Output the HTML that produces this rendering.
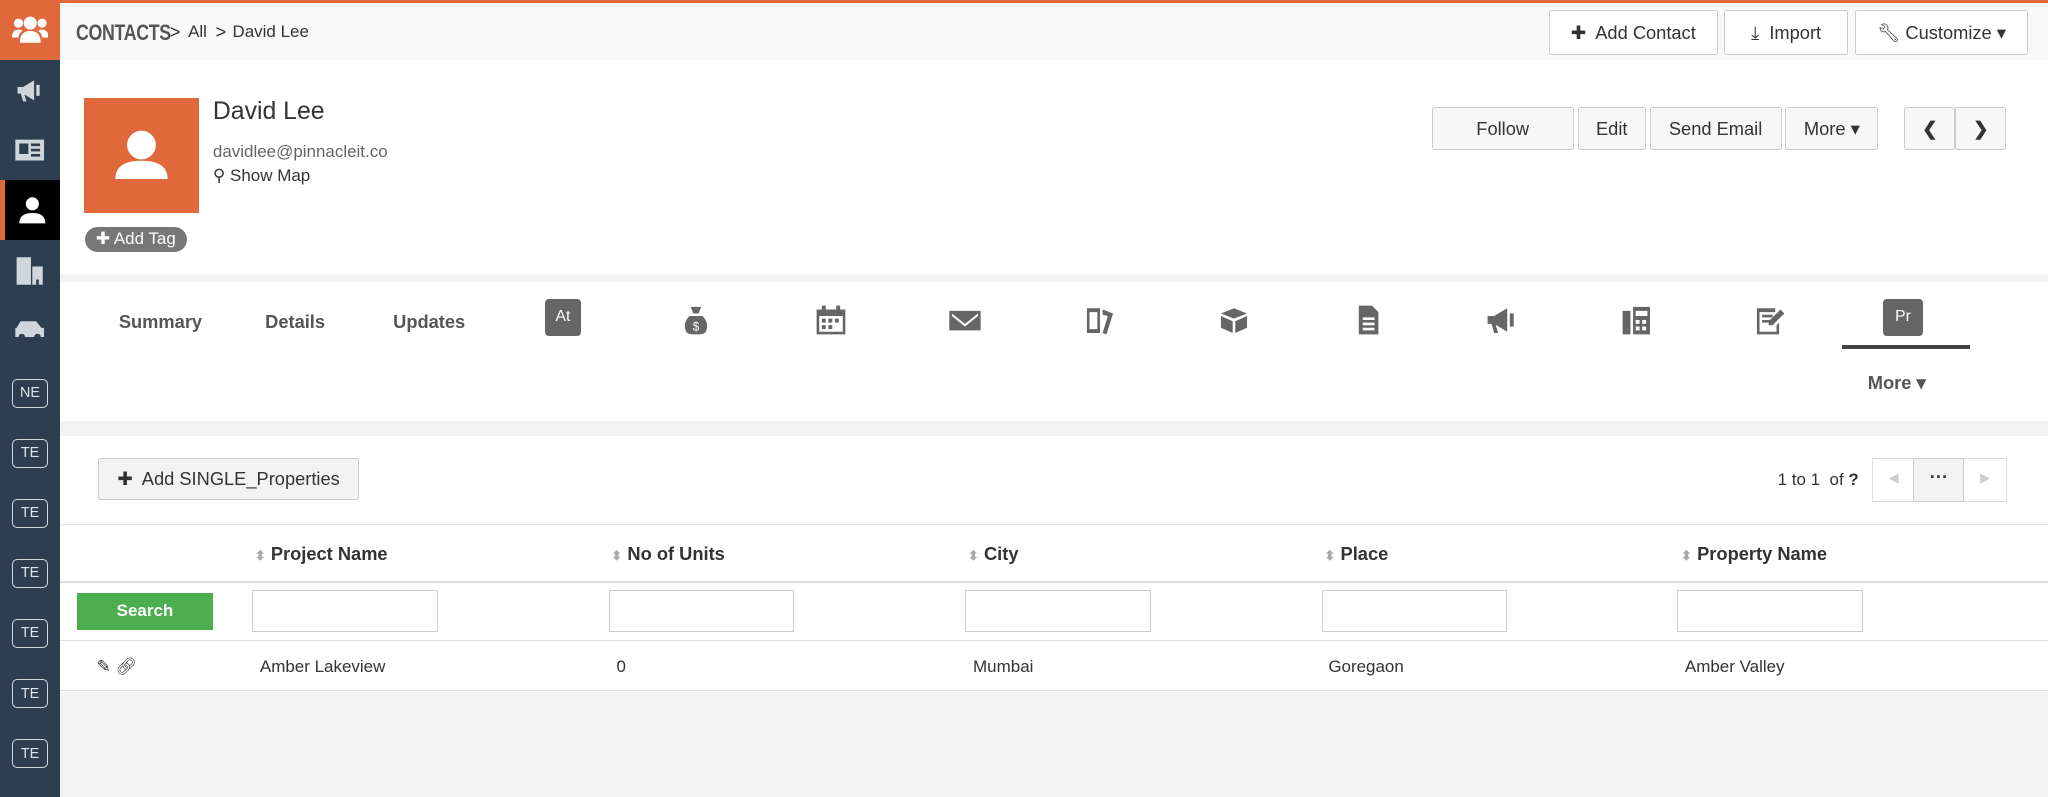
<!DOCTYPE html>
<html><head><meta charset="utf-8"><style>
*{box-sizing:border-box;margin:0;padding:0}
html,body{width:2048px;height:797px;overflow:hidden;background:#f3f3f3}
#w{zoom:1.30612;width:1568px;height:610px;position:relative;font-family:"Liberation Sans",Arial,sans-serif;color:#333;font-size:14px;background:#f3f3f3}
.a{position:absolute}
.sb{left:0;top:0;width:46px;height:610px;background:#2d3e50}
.si{position:absolute;left:0;width:46px;height:46px;display:flex;align-items:center;justify-content:center}
.bx{width:28px;height:22px;border:1.5px solid #cfd6dc;border-radius:4px;color:#dfe4e8;font-size:11px;display:flex;align-items:center;justify-content:center}
.btn{position:absolute;background:#f7f7f7;border:1px solid #ccc;border-radius:2px;display:flex;align-items:center;justify-content:center;font-size:14px;color:#333}
.tab{position:absolute;top:238px;font-size:14px;color:#555;font-weight:bold}
.ic{position:absolute;top:232px;width:26px;height:26px;fill:#666}
.th{position:absolute;top:416px;font-weight:bold;font-size:14px}
.th:before{content:"⬍";color:#aaa;font-size:10px;margin-right:4px}
.in{position:absolute;top:452px;width:142px;height:32px;border:1px solid #ccc;background:#fff}
.td{position:absolute;top:503px;font-size:13px}
</style></head><body><div id="w">
<div class="a" style="left:46px;top:0;width:1522px;height:2px;background:#e0693b"></div>
<div class="a" style="left:46px;top:2px;width:1522px;height:44px;background:#f9f9f9"></div>
<div class="a" style="left:58px;top:15px;font-weight:bold;font-size:17px;color:#555;letter-spacing:-0.3px;transform:scaleX(.8);transform-origin:left">CONTACTS</div>
<div class="a" style="left:130px;top:16px;font-size:14px;color:#333">&gt;</div>
<div class="a" style="left:144px;top:17px;font-size:13px;color:#333">All</div>
<div class="a" style="left:165px;top:16px;font-size:14px;color:#333">&gt;</div>
<div class="a" style="left:178px;top:17px;font-size:13px;color:#333">David Lee</div>
<div class="btn" style="left:1186px;top:8px;width:129px;height:34px;background:#fff">✚&nbsp; Add Contact</div>
<div class="btn" style="left:1320px;top:8px;width:95px;height:34px;background:#fff">⤓&nbsp; Import</div>
<div class="btn" style="left:1420px;top:8px;width:133px;height:34px;background:#fff">🔧︎ Customize ▾</div>
<div class="a" style="left:46px;top:46px;width:1522px;height:164px;background:#fff"></div>
<div class="a" style="left:64px;top:75px;width:88px;height:88px;background:#e0693b"><svg width="88" height="88"><circle cx="44" cy="36" r="11" fill="#fff"/><path d="M24 62 Q24 48 44 48 Q64 48 64 62 Z" fill="#fff"/></svg></div>
<div class="a" style="left:65px;top:174px;width:78px;height:19px;border-radius:10px;background:#777;color:#fff;font-size:13px;text-align:center;line-height:19px">✚ Add Tag</div>
<div class="a" style="left:163px;top:75px;font-size:19px;color:#333">David Lee</div>
<div class="a" style="left:163px;top:109px;font-size:13px;color:#666">davidlee@pinnacleit.co</div>
<div class="a" style="left:163px;top:127px;font-size:13px;color:#333">⚲ Show Map</div>
<div class="btn" style="left:1096px;top:82px;width:109px;height:33px">Follow</div>
<div class="btn" style="left:1208px;top:82px;width:52px;height:33px">Edit</div>
<div class="btn" style="left:1263px;top:82px;width:101px;height:33px">Send Email</div>
<div class="btn" style="left:1367px;top:82px;width:71px;height:33px">More ▾</div>
<div class="btn" style="left:1458px;top:82px;width:39px;height:33px;font-weight:bold">❮</div>
<div class="btn" style="left:1497px;top:82px;width:39px;height:33px;font-weight:bold">❯</div>
<div class="a" style="left:46px;top:216px;width:1522px;height:106px;background:#fff"></div>
<div class="tab" style="left:91px">Summary</div>
<div class="tab" style="left:203px">Details</div>
<div class="tab" style="left:301px">Updates</div>
<div class="a" style="left:417px;top:229px;width:28px;height:28px;border-radius:3px;background:#666;color:#fff;font-size:12px;text-align:center;line-height:28px">At</div>
<svg class="ic" style="left:520px" viewBox="0 0 26 26"><path d="M9 3h8l-2 5h-4zM8 10h10q5 5 3 11-1 3-5 3h-6q-4 0-5-3-2-6 3-11z"/><text x="13" y="21" font-size="9" fill="#fff" text-anchor="middle" font-family="Liberation Sans">$</text></svg>
<svg class="ic" style="left:623px" viewBox="0 0 26 26"><path d="M2 5h22v19H2zM4 10v12h18V10z"/><rect x="6" y="2" width="3" height="6"/><rect x="17" y="2" width="3" height="6"/><rect x="6" y="12" width="3" height="3"/><rect x="11" y="12" width="3" height="3"/><rect x="16" y="12" width="3" height="3"/><rect x="6" y="17" width="3" height="3"/><rect x="11" y="17" width="3" height="3"/></svg>
<svg class="ic" style="left:726px" viewBox="0 0 26 26"><path d="M1 6h24v15H1zM3 8l10 8 10-8v2l-10 8-10-8z" fill-rule="evenodd"/></svg>
<svg class="ic" style="left:829px" viewBox="0 0 26 26"><path d="M3 4h10v19H3zM5 7v13h6V7zM15 5l8 3-5 16-3-1 4-13-4-1z"/></svg>
<svg class="ic" style="left:932px" viewBox="0 0 26 26"><path d="M13 4l10 4-10 4-10-4zM3 10l9 4v9l-9-4zM23 10l-9 4v9l9-4z"/></svg>
<svg class="ic" style="left:1034px" viewBox="0 0 26 26"><path d="M6 2h10l5 5v17H6zM9 11h9v2H9zM9 15h9v2H9zM9 19h9v2H9z" fill-rule="evenodd"/></svg>
<svg class="ic" style="left:1137px" viewBox="0 0 26 26"><path d="M2 10h5l10-6v18l-10-6H2zM19 8h3v10h-3zM8 16l2 7h-3l-2-7z"/></svg>
<svg class="ic" style="left:1240px" viewBox="0 0 26 26"><path d="M2 6h6v18H2zM10 3h13v21H10zM12 6v4h9V6zM12 13h3v3h-3zM17 13h3v3h-3zM12 18h3v3h-3zM17 18h3v3h-3z" fill-rule="evenodd"/></svg>
<svg class="ic" style="left:1342px" viewBox="0 0 26 26"><path d="M3 4h14v3H5v15h13v-5l2-2v9H3zM7 9h8v2H7zM7 13h6v2H7zM21 5l3 3-9 9h-3v-3z"/></svg>
<div class="a" style="left:1442px;top:229px;width:30px;height:28px;border-radius:3px;background:#666;color:#fff;font-size:12px;text-align:center;line-height:28px">Pr</div>
<div class="a" style="left:1410px;top:264px;width:98px;height:3px;background:#444"></div>
<div class="a" style="left:1430px;top:285px;font-size:14px;color:#555;font-weight:bold">More ▾</div>
<div class="a" style="left:46px;top:334px;width:1522px;height:196px;background:#fff"></div>
<div class="btn" style="left:75px;top:351px;width:200px;height:32px;background:#f3f3f3;font-size:14px">✚&nbsp; Add SINGLE_Properties</div>
<div class="a" style="left:1361px;top:360px;font-size:13px">1 to 1 &nbsp;of <b>?</b></div>
<div class="a" style="left:1433px;top:351px;width:104px;height:33px;border:1px solid #ddd"></div>
<div class="a" style="left:1465px;top:351px;width:39px;height:33px;border:1px solid #ccc;background:#f3f3f3;text-align:center;font-weight:bold;line-height:28px">···</div>
<div class="a" style="left:1446px;top:360px;color:#ccc;font-size:10px">◀</div>
<div class="a" style="left:1516px;top:360px;color:#ccc;font-size:10px">▶</div>
<div class="a" style="left:46px;top:401px;width:1522px;height:1px;background:#ddd"></div>
<div class="a" style="left:46px;top:445px;width:1522px;height:1px;background:#ddd"></div>
<div class="a" style="left:46px;top:490px;width:1522px;height:1px;background:#ddd"></div>
<div class="a" style="left:46px;top:528px;width:1522px;height:1px;background:#ddd"></div>
<div class="th" style="left:195px">Project Name</div>
<div class="th" style="left:468px">No of Units</div>
<div class="th" style="left:741px">City</div>
<div class="th" style="left:1014px">Place</div>
<div class="th" style="left:1287px">Property Name</div>
<div class="a" style="left:59px;top:454px;width:104px;height:28px;background:#4cae4c;color:#fff;font-weight:bold;font-size:13px;text-align:center;line-height:28px">Search</div>
<div class="in" style="left:193px"></div><div class="in" style="left:466px"></div><div class="in" style="left:739px"></div><div class="in" style="left:1012px"></div><div class="in" style="left:1284px"></div>
<div class="td" style="left:74px">✎ 🔗︎</div>
<div class="td" style="left:199px">Amber Lakeview</div>
<div class="td" style="left:472px">0</div>
<div class="td" style="left:745px">Mumbai</div>
<div class="td" style="left:1017px">Goregaon</div>
<div class="td" style="left:1290px">Amber Valley</div>
<div class="a sb"></div>
<div class="si" style="top:0;background:#e0693b"><svg width="28" height="24" viewBox="0 0 28 24" fill="#fff"><circle cx="14" cy="7" r="5"/><circle cx="5" cy="7" r="3.5"/><circle cx="23" cy="7" r="3.5"/><path d="M6 22q0-9 8-9t8 9zM0 18q0-6 5-6 2 0 3 1-3 2-3 5zM28 18q0-6-5-6-2 0-3 1 3 2 3 5z"/></svg></div>
<div class="si" style="top:46px"><svg width="24" height="22" viewBox="0 0 26 26" fill="#cfd6dc"><path d="M2 10h5l10-6v18l-10-6H2zM19 8h3v10h-3zM8 16l2 7h-3l-2-7z"/></svg></div>
<div class="si" style="top:92px"><svg width="24" height="20" viewBox="0 0 24 20" fill="#cfd6dc"><path d="M1 2h22v16H1zM4 5v8h7V5zM13 5h7v2h-7zM13 9h7v2h-7zM13 13h7v2h-7z" fill-rule="evenodd"/></svg></div>
<div class="si" style="top:138px;background:#000;border-left:4px solid #e0693b"><svg width="22" height="22" viewBox="0 0 22 22" fill="#fff"><circle cx="11" cy="6" r="5"/><path d="M1 21q0-8 10-8t10 8z"/></svg></div>
<div class="si" style="top:184px"><svg width="24" height="22" viewBox="0 0 24 22" fill="#cfd6dc"><path d="M2 1h11v21H2zM14 8h8v14h-3v-4h-2v4h-3z"/></svg></div>
<div class="si" style="top:230px"><svg width="24" height="16" viewBox="0 0 24 16" fill="#cfd6dc"><path d="M2 6l3-5h12l4 5h2v7H1V6z"/><circle cx="6" cy="13" r="2.5" fill="#2d3e50"/><circle cx="18" cy="13" r="2.5" fill="#2d3e50"/></svg></div>
<div class="si" style="top:278px"><div class="bx">NE</div></div>
<div class="si" style="top:324px"><div class="bx">TE</div></div>
<div class="si" style="top:370px"><div class="bx">TE</div></div>
<div class="si" style="top:416px"><div class="bx">TE</div></div>
<div class="si" style="top:462px"><div class="bx">TE</div></div>
<div class="si" style="top:508px"><div class="bx">TE</div></div>
<div class="si" style="top:554px"><div class="bx">TE</div></div>
</div></body></html>
